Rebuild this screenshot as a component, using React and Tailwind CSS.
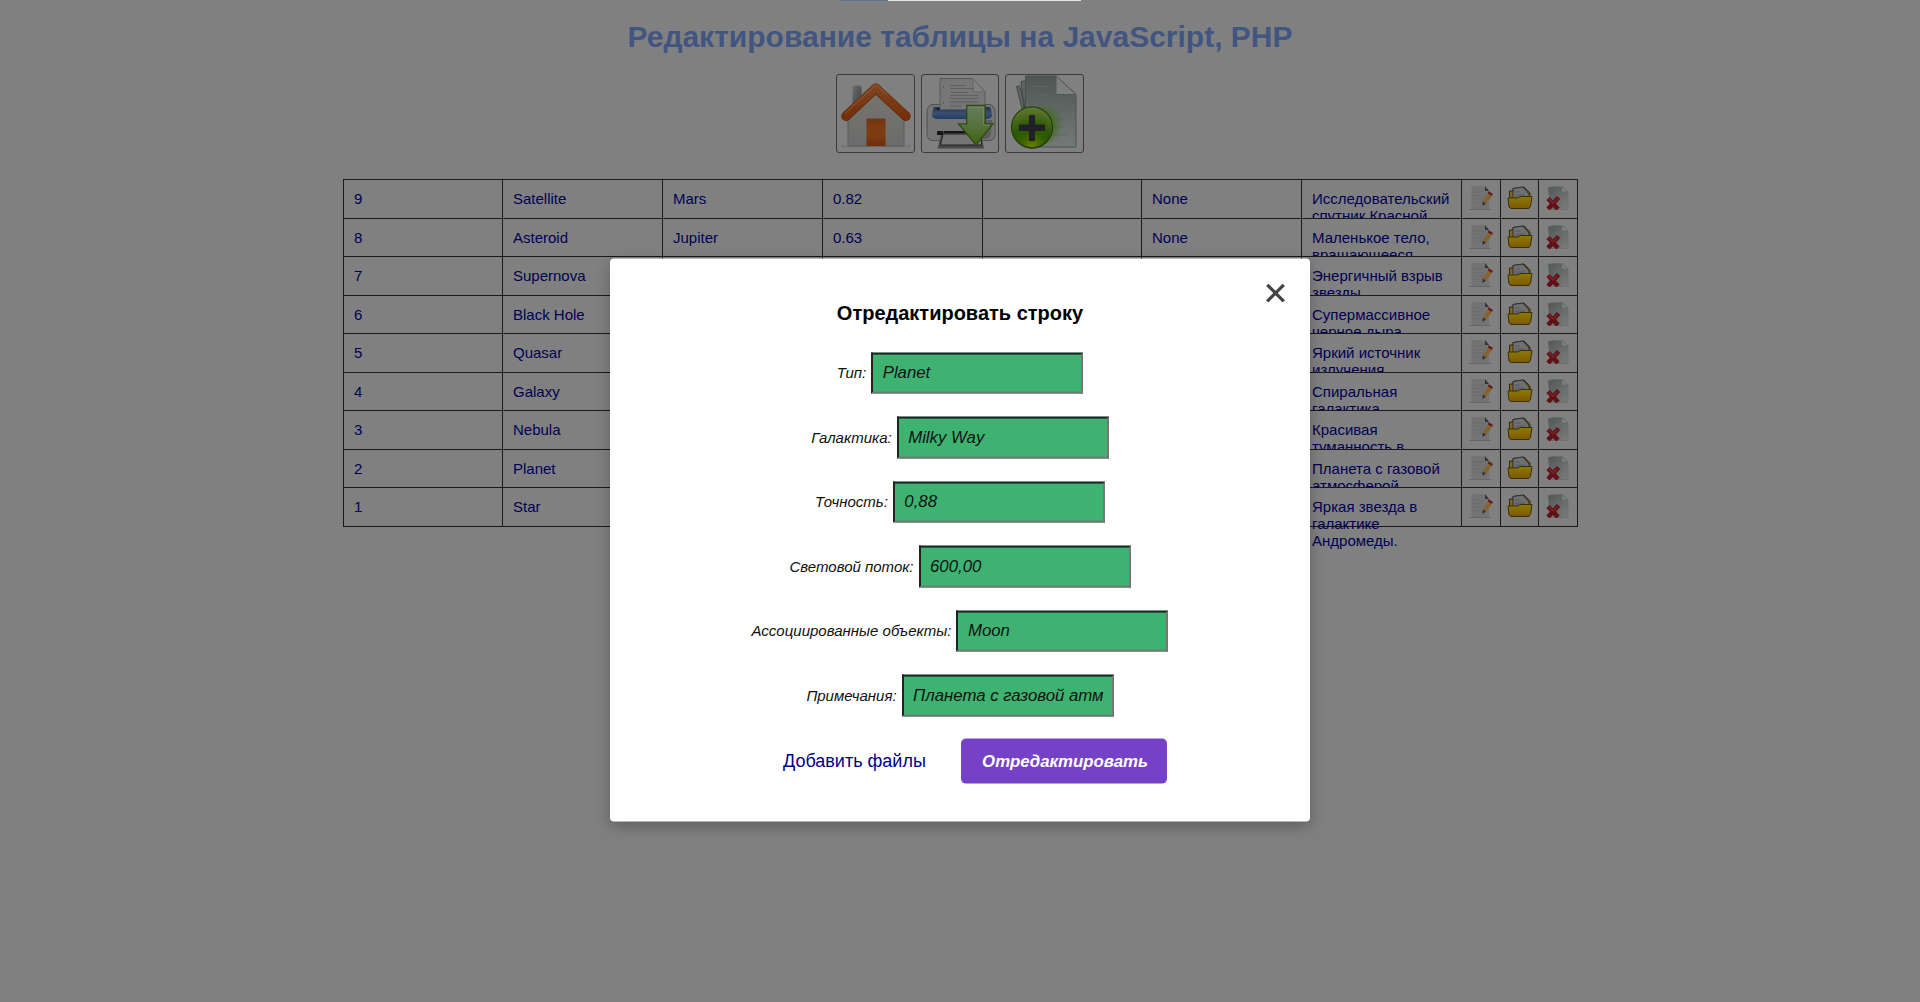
const rows = [
  ["9", "Satellite", "Mars", "0.82", "", "None", "Исследовательский спутник Красной"],
  ["8", "Asteroid", "Jupiter", "0.63", "", "None", "Маленькое тело, вращающееся"],
  ["7", "Supernova", "", "", "", "", "Энергичный взрыв звезды"],
  ["6", "Black Hole", "", "", "", "", "Супермассивное черное дыра"],
  ["5", "Quasar", "", "", "", "", "Яркий источник излучения"],
  ["4", "Galaxy", "", "", "", "", "Спиральная галактика"],
  ["3", "Nebula", "", "", "", "", "Красивая туманность в"],
  ["2", "Planet", "", "", "", "", "Планета с газовой атмосферой"],
  ["1", "Star", "", "", "", "", "Яркая звезда в галактике Андромеды."],
];

const fields = [
  ["Тип:", "Planet"],
  ["Галактика:", "Milky Way"],
  ["Точность:", "0,88"],
  ["Световой поток:", "600,00"],
  ["Ассоциированные объекты:", "Moon"],
  ["Примечания:", "Планета с газовой атм"],
];

function Defs() {
  return (
    <svg width="0" height="0" className="absolute">
      <defs>
        <linearGradient id="wall" x1="0" y1="0" x2="0" y2="1"><stop offset="0" stopColor="#77746f" /><stop offset="1" stopColor="#6b6c6b" /></linearGradient>
        <linearGradient id="door" x1="0" y1="0" x2="0" y2="1"><stop offset="0" stopColor="#6f3510" /><stop offset=".3" stopColor="#7d3c12" /><stop offset=".7" stopColor="#7d3a10" /><stop offset="1" stopColor="#6c2d0f" /></linearGradient>
        <linearGradient id="roof" x1="0" y1="0" x2="0" y2="1"><stop offset="0" stopColor="#7f4320" /><stop offset="1" stopColor="#762f09" /></linearGradient>
        <linearGradient id="pipe" x1="0" y1="0" x2="1" y2="1"><stop offset="0" stopColor="#6b6c6d" /><stop offset="1" stopColor="#3b4145" /></linearGradient>
        <linearGradient id="blue" x1="0" y1="0" x2="0" y2="1"><stop offset="0" stopColor="#1f3358" /><stop offset=".5" stopColor="#3b5070" /><stop offset="1" stopColor="#233d66" /></linearGradient>
        <linearGradient id="arrow" x1="0" y1="0" x2="0" y2="1"><stop offset="0" stopColor="#667c5b" /><stop offset=".5" stopColor="#56723f" /><stop offset="1" stopColor="#3b650c" /></linearGradient>
        <linearGradient id="sheet" x1="0" y1="0" x2="0" y2="1"><stop offset="0" stopColor="#4e5654" /><stop offset="1" stopColor="#727b78" /></linearGradient>
        <radialGradient id="glow"><stop offset=".5" stopColor="#3f6a12" stopOpacity=".75" /><stop offset="1" stopColor="#4f6a3a" stopOpacity="0" /></radialGradient>
        <radialGradient id="ball" cx=".5" cy="1" r="1"><stop offset="0" stopColor="#6e8007" /><stop offset=".35" stopColor="#315c02" /><stop offset=".55" stopColor="#2c5804" /><stop offset="1" stopColor="#647a34" /></radialGradient>
        <linearGradient id="folder" x1="0" y1="0" x2="0" y2="1"><stop offset="0" stopColor="#8a7b06" /><stop offset="1" stopColor="#805800" /></linearGradient>
        <linearGradient id="page" x1="0" y1="0" x2="1" y2="1"><stop offset="0" stopColor="#525655" /><stop offset="1" stopColor="#7a7d7c" /></linearGradient>
      </defs>
    </svg>
  );
}

function HomeIcon() {
  return (
    <svg viewBox="0 0 77 77" className="h-full w-full">
      <path d="M4 71.500h69" stroke="#727272" strokeWidth="1.500" />
      <rect x="15.500" y="10.500" width="9" height="22" rx="2" fill="url(#pipe)" />
      <path d="M11 71V41L39 13l28 28v30z" fill="url(#wall)" stroke="#5c5c5c" />
      <path d="M29.500 71V43.500h19V71z" fill="url(#door)" />
      <path d="M9 41.300 38.700 13.300 69 41.300" fill="none" stroke="#5e2a0b" strokeWidth="9.500" strokeLinecap="round" strokeLinejoin="round" />
      <path d="M9 41 38.700 13 69 41" fill="none" stroke="url(#roof)" strokeWidth="8" strokeLinecap="round" strokeLinejoin="round" />
      <path d="M8 38.500 38.700 10 50 20" fill="none" stroke="#8f6145" strokeWidth=".8" />
    </svg>
  );
}

function PrintIcon() {
  return (
    <svg viewBox="0 0 76 77" className="h-full w-full">
      <path d="M11 29.500h56q5 0 6 7v22q0 7-6 7H11q-6 0-6-7v-22q1-7 6-7z" fill="#757575" stroke="#505050" />
      <path d="M58 45h12l-1 14q-1 5-6 5h-5z" fill="#5c5c5c" />
      <path d="M12 32h56q2 4 2 8 0 4-6 4H16q-6 0-6-4 0-4 2-8z" fill="url(#blue)" />
      <path d="M15 33h45v2H15z" fill="#151515" />
      <path d="M18 34.500V3.500h33L63 17v17.500z" fill="#767676" stroke="#585858" />
      <path d="M51 3.500V17h12z" fill="#808080" stroke="#666" />
      <path d="M28 10.500h16M28 13.500h24M28 17.500h18M28 20.500h28M28 23.500h28M28 27h28M28 31h12" stroke="#5f5f5f" />
      <path d="M21.500 11v2M21.500 27v2" stroke="#555" />
      <path d="M15 56h44v3l3 14.500H15.500L19 60h-4z" fill="#484848" />
      <path d="M15 56h6v4h-6zM22 56h37v2H22z" fill="#151515" />
      <path d="M21 59h37l2 11H18.500z" fill="#757575" stroke="#222" />
      <path d="M44.700 30.500h18.500v18.300H71L54 70 36.700 48.800h8z" fill="url(#arrow)" stroke="#2c4a12" strokeWidth="1.300" />
      <path d="M46.500 32h15v18h6" fill="none" stroke="#76886b" strokeWidth=".8" />
    </svg>
  );
}

function AddIcon() {
  return (
    <svg viewBox="0 0 77 77" className="h-full w-full">
      <path d="M10.500 11.500l3-1 5 18v8h-2zM15 6.500l5-1v30h-2z" fill="#5c6462" stroke="#3d4341" strokeWidth=".8" />
      <path d="M19.500 1h30.500L70 19.500v52.500H19.500z" fill="url(#sheet)" stroke="#4b5350" />
      <path d="M50 1v18.500h20z" fill="#7c7f7e" stroke="#505856" />
      <path d="M28 11.500h14M28 20h14M28 28h32M40 36h20M44 44h16M48 52h12M44 60h16" stroke="#5d6662" />
      <path d="M19.500 72V27h38v45z" fill="url(#glow)" />
      <circle cx="26.200" cy="53" r="20.500" fill="#1c2c10" />
      <circle cx="26" cy="52.300" r="20.500" fill="url(#ball)" stroke="#23400a" strokeWidth="1.200" />
      <path d="M23 40h6v9.500h10v6.500H29v10h-6V56H13v-6.500h10z" fill="#202124" />
    </svg>
  );
}

function EditIcon() {
  return (
    <svg viewBox="0 0 24 24" className="size-6">
      <path d="M2.500 0h13.500l4 5v18h-17.500z" fill="#737373" />
      <path d="M4 6h11M4 9.500h11M4 13h11M4 16.500h9" stroke="#6c6c6c" />
      <path d="M16 0v5h4z" fill="#333" />
      <path d="M0 23.500h22" stroke="#666" />
      <path d="m21 9-5.500 7.500" stroke="#86632a" strokeWidth="4.200" />
      <path d="m13.800 15.500 3 2-3.300 2.500z" fill="#2b2b2b" />
      <path d="m19.300 6.300 4 2.700" stroke="#651820" strokeWidth="2.300" />
    </svg>
  );
}

function FolderIcon() {
  return (
    <svg viewBox="0 0 26 24" className="h-6 w-[26px]">
      <path d="M2.500 5H6V2.500L17 1l6 6v7H2.500z" fill="#8a6500" stroke="#2d2918" />
      <path d="M6 2.500 16 1l6 7v6H6z" fill="#6e7073" stroke="#303030" />
      <path d="M8 6h5M8 9h10M8 11h10" stroke="#56595d" />
      <path d="M1 12h10l2-1.500h12L23.500 20 22 22.500H4L2 21z" fill="url(#folder)" stroke="#3a3006" />
    </svg>
  );
}

function DeleteIcon() {
  return (
    <svg viewBox="0 0 24 24" className="size-6">
      <path d="M2 1.500 7 .5h9l6 5.500v17.500H5z" fill="url(#page)" stroke="#666a69" strokeWidth=".7" />
      <path d="M16 .5V6h6z" fill="#828482" stroke="#606463" strokeWidth=".7" />
      <path d="m2 12.500 10 10.500M12.500 11.500 2 23" stroke="#621016" strokeWidth="4.500" />
      <path d="m2.500 12.500 4.500 4.500 4.500-4.500" fill="none" stroke="#74292e" strokeWidth="1.500" />
    </svg>
  );
}

const actions = [EditIcon, FolderIcon, DeleteIcon];

export default function App() {
  return (
    <div className="relative h-[1002px] w-full overflow-hidden bg-[#808080] font-['Liberation_Sans',Arial,sans-serif]">
      <Defs />
      <div className="absolute top-0 left-[840px] flex h-px w-[241px]">
        <div className="w-12 bg-[#5d7391]" />
        <div className="flex-1 bg-[#e0e4e2]" />
      </div>
      <div className="flex flex-col items-center">
        <h1 className="mt-[18px] h-[37px] text-[30px] leading-[37px] font-bold whitespace-nowrap text-[#405580]">Редактирование таблицы на JavaScript, PHP</h1>
        <div className="mt-[19px] flex gap-[6px]">
          <div className="size-[79px] rounded-[3px] border border-[#3a3a3a]"><HomeIcon /></div>
          <div className="h-[79px] w-[78px] rounded-[3px] border border-[#3a3a3a]"><PrintIcon /></div>
          <div className="size-[79px] rounded-[3px] border border-[#3a3a3a]"><AddIcon /></div>
        </div>
      </div>
      <div className="mt-[26px] ml-[343px] w-[1235px] border-t border-l border-[#1a1a1a] text-[15px] leading-[17px] text-[#000054]">
        {rows.map((r, i) => (
          <div key={r[0]} className="grid h-[38px] grid-cols-[159px_160px_160px_160px_159px_160px_160px_39px_38px_39px] grid-rows-[100%] odd:h-[39px]">
            {r.map((c, j) => (
              <div key={j} className={`border-r border-b border-[#1a1a1a] pt-[10px] pl-[10px] ${i < 8 ? "overflow-hidden" : ""}`}>{c}</div>
            ))}
            {actions.map((Icon, j) => (
              <div key={j} className="flex justify-center border-r border-b border-[#1a1a1a] pt-[6px]"><Icon /></div>
            ))}
          </div>
        ))}
      </div>

      <div className="absolute top-[258px] left-[610px] flex h-[563px] w-[700px] translate-y-[0.6px] flex-col items-center rounded-[4px] bg-white shadow-[0_5px_15px_rgba(0,0,0,0.25)]">
        <svg viewBox="0 0 19 19" className="absolute top-[25px] right-[25px] size-[19px]"><path d="m1.200 1.200 16.600 16.600M17.800 1.200 1.200 17.800" stroke="#444" strokeWidth="3.200" /></svg>
        <h2 className="mt-[42px] h-6 text-[20px] leading-6 font-bold">Отредактировать строку</h2>
        <div className="mt-[27.700px] flex flex-col items-center gap-[22.900px] italic">
          {fields.map(([label, value]) => (
            <label key={label} className="flex h-[41.600px] items-center gap-[5px] text-[15px] whitespace-nowrap text-[#111]">
              <span>{label}</span>
              <span className="flex h-[41.600px] w-[212px] items-center border-2 border-t-[#222] border-r-[#767676] border-b-[#767676] border-l-[#222] bg-[#3eb371] pb-px pl-[9.500px] text-[16.800px]">{value}</span>
            </label>
          ))}
        </div>
        <div className="mt-[22.700px] flex items-center self-start pl-[173px]">
          <a className="w-[178px] text-[18px] whitespace-nowrap text-[#00008b]">Добавить файлы</a>
          <button className="h-[45px] w-[206px] rounded-[5px] bg-[#7541c7] pl-[2px] text-[16.800px] font-bold text-white italic">Отредактировать</button>
        </div>
      </div>
    </div>
  );
}
